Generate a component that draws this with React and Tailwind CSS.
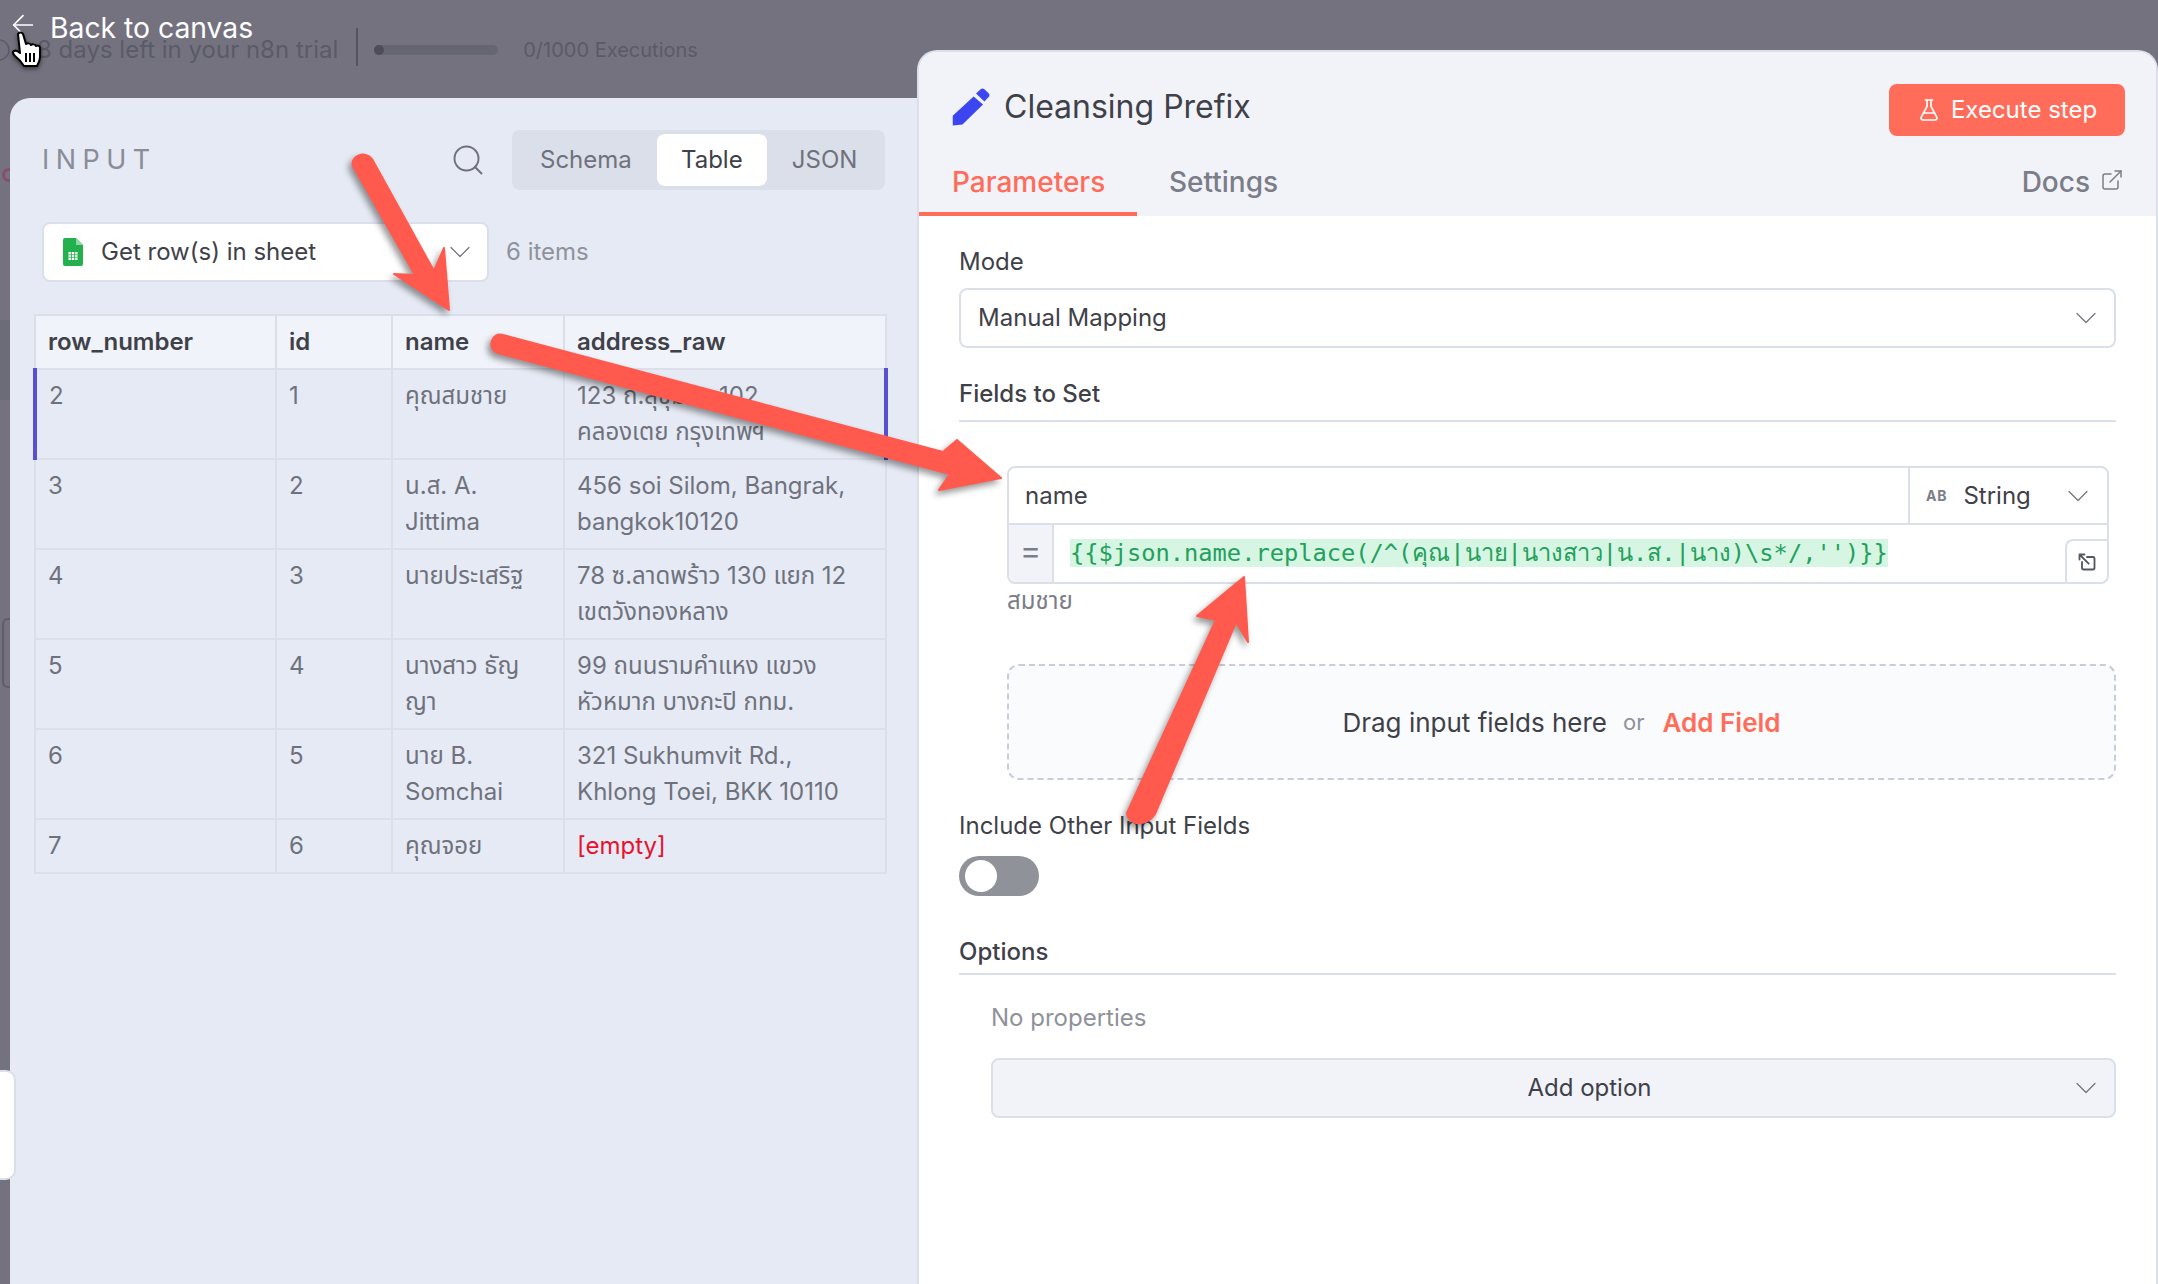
import React from 'react';
import { ChevronDown, Search, FlaskConical, ExternalLink, ArrowLeft, Info } from 'lucide-react';

const rows = [
  { num: '2', id: '1', name: ['คุณสมชาย'], address: ['123 ถ.สุขุมวิท 102', 'คลองเตย กรุงเทพฯ'], active: true },
  { num: '3', id: '2', name: ['น.ส. A.', 'Jittima'], address: ['456 soi Silom, Bangrak,', 'bangkok10120'] },
  { num: '4', id: '3', name: ['นายประเสริฐ'], address: ['78 ซ.ลาดพร้าว 130 แยก 12', 'เขตวังทองหลาง'] },
  { num: '5', id: '4', name: ['นางสาว ธัญ', 'ญา'], address: ['99 ถนนรามคำแหง แขวง', 'หัวหมาก บางกะปิ กทม.'] },
  { num: '6', id: '5', name: ['นาย B.', 'Somchai'], address: ['321 Sukhumvit Rd.,', 'Khlong Toei, BKK 10110'] },
  { num: '7', id: '6', name: ['คุณจอย'], empty: true },
];

const SheetIcon = () => (
  <svg width="20" height="28" viewBox="0 0 20 28" className="shrink-0">
    <path d="M2 0h11l7 7v19a2 2 0 0 1-2 2H2a2 2 0 0 1-2-2V2a2 2 0 0 1 2-2z" fill="#23b14d" />
    <path d="M13 0l7 7h-7z" fill="#8ed8a6" />
    <path d="M5.500 14h9v8h-9z" fill="#fff" />
    <path d="M5.500 16.700h9M5.500 19.300h9M8.500 14v8M11.500 14v8" stroke="#23b14d" strokeWidth="0.8" />
  </svg>
);

const PenIcon = () => (
  <svg width="40" height="40" viewBox="30 35 115 115" className="shrink-0">
    <path d="M95 62l27 23-59 58-28 3v-28z" fill="#3b46f0" />
    <path d="M102 54l14-13c3-2 6-2 9 0l13 12c3 3 3 7 1 10l-13 14z" fill="#3b46f0" />
  </svg>
);

const ExpandIcon = () => (
  <svg width="20" height="20" viewBox="0 0 24 24" fill="none" stroke="#555761" strokeWidth="2.200" strokeLinecap="round" strokeLinejoin="round">
    <path d="M12 6h7a2 2 0 0 1 2 2v11a2 2 0 0 1-2 2H8a2 2 0 0 1-2-2v-7" />
    <path d="M14 14L3 3M3 9V3h6" />
  </svg>
);

const HandCursor = () => (
  <svg width="34" height="40" viewBox="0 0 34 40" className="absolute left-[9px] top-[29px] drop-shadow-[0_2px_2px_rgba(0,0,0,0.5)]">
    <path
      d="M9 5c1-2 4-2 5 0l3 10c1-1 4-1 5 1 1-1 4-1 5 1 2-1 4 0 4 2l0 9c0 4-2 7-3 9H15c-2-3-5-7-9-10-2-2-3-4-1-5 2-1 4 0 6 2z"
      fill="#fff"
      stroke="#000"
      strokeWidth="2"
      strokeLinejoin="round"
    />
    <path d="M17 24v9M21 24v9M25 24v9" stroke="#000" strokeWidth="2" />
  </svg>
);

// the red annotation arrows drawn on top of the screenshot
const Arrows = () => (
  <svg width="2158" height="1284" viewBox="0 0 2158 1284" className="pointer-events-none absolute inset-0 drop-shadow-[-3px_4px_3px_rgba(0,0,0,0.4)]">
    <g fill="#ff5a4d" stroke="#ff5a4d" strokeWidth="2" strokeLinejoin="round">
      <path d="M353 166c-3-10 12-16 19-7l62 112 10-23 5 62-55-36 21 1z" />
      <path d="M503 335l440 117 14-12 44 38-62 12 11-16-452-121c-12-4-6-22 5-18z" />
      <path d="M1236 622l-79 187c-4 16-28 20-30 4l89-193-19-4 47-39 4 65z" />
    </g>
  </svg>
);

const Chevron = ({ className = '' }) => <ChevronDown size={36} strokeWidth={0.8} className={`text-[#6f727d] ${className}`} />;

const TableCell = ({ lines, className = '' }) => (
  <td className={`border-2 border-[#dadfe9] px-[12px] pt-[8px] align-top leading-[36px] whitespace-nowrap ${className}`}>
    {lines.map((line) => (
      <div key={line}>{line}</div>
    ))}
  </td>
);

const InputPanel = () => (
  <div className="h-[1186px] w-[907px] rounded-tl-[20px] bg-[#e6eaf4] px-[24px] pt-[32px]">
    <div className="flex h-[60px] items-center pl-[8px] pr-[8px]">
      <span className="text-[27px] tracking-[0.24em] text-[#8a8d97]">INPUT</span>
      <Search size={36} strokeWidth={1.300} className="ml-auto mr-[26px] text-[#6f727d]" />
      <div className="flex h-[60px] w-[373px] items-center rounded-[8px] bg-[#dadfe9] pl-[28px] text-[24px] text-[#6f727d]">
        <span>Schema</span>
        <span className="ml-[25px] flex h-[52px] w-[110px] items-center justify-center rounded-[8px] bg-white text-[#3f4149]">Table</span>
        <span className="ml-[25px]">JSON</span>
      </div>
    </div>
    <div className="mt-[32px] flex items-center pl-[8px]">
      <div className="flex h-[60px] w-[447px] items-center rounded-[8px] border-2 border-[#dadfe9] bg-white pl-[19px] pr-[9px] text-[24px] text-[#3f4149]">
        <SheetIcon />
        <span className="ml-[18px]">Get row(s) in sheet</span>
        <Chevron className="ml-auto" />
      </div>
      <span className="ml-[17px] text-[24px] text-[#8f929b]">6 items</span>
    </div>
    <table className="-ml-[1px] mt-[32px] w-[851px] table-fixed border-collapse text-[24px] text-[#6f727d]">
      <colgroup>
        <col className="w-[241px]" />
        <col className="w-[116px]" />
        <col className="w-[172px]" />
        <col className="w-[322px]" />
      </colgroup>
      <thead>
        <tr className="h-[54px] bg-[#f1f3fa] text-left font-semibold text-[#3f4149]">
          {['row_number', 'id', 'name', 'address_raw'].map((h) => (
            <th key={h} className="border-2 border-[#dadfe9] px-[12px] font-semibold">{h}</th>
          ))}
        </tr>
      </thead>
      <tbody>
        {rows.map((row) => (
          <tr key={row.num} className={row.empty ? 'h-[54px]' : 'h-[90px]'}>
            <TableCell lines={[row.num]} className={row.active ? 'border-l-4 border-l-[#5a4fcf]' : ''} />
            <TableCell lines={[row.id]} />
            <TableCell lines={row.name} />
            {row.empty ? (
              <TableCell lines={['[empty]']} className="text-[#e8112d]" />
            ) : (
              <TableCell lines={row.address} className={row.active ? 'border-r-4 border-r-[#5a4fcf]' : ''} />
            )}
          </tr>
        ))}
      </tbody>
    </table>
  </div>
);

const SettingsPanel = () => (
  <div className="h-[1234px] overflow-hidden rounded-t-[20px] border-2 border-b-0 border-[#dadfe9] bg-white">
    <div className="h-[164px] bg-[#f1f3f9]">
      <div className="flex h-[96px] items-start pl-[32px] pr-[31px]">
        <div className="mt-[35px] flex items-center gap-[13px]">
          <PenIcon />
          <span className="text-[32px] leading-[38px] text-[#3f4149]">Cleansing Prefix</span>
        </div>
        <button className="mt-[32px] ml-auto flex h-[52px] w-[236px] items-center justify-center gap-[10px] rounded-[8px] bg-[#ff6d5a] text-[24px] text-white">
          <FlaskConical size={24} strokeWidth={1.700} />
          Execute step
        </button>
      </div>
      <div className="flex h-[68px] items-stretch pr-[32px] text-[28px]">
        <div className="flex w-[218px] items-center border-b-4 border-[#ff6d5a] pl-[33px] pt-[4px] font-medium text-[#ff6d5a]">Parameters</div>
        <div className="ml-[32px] flex items-center font-medium text-[#7b7d87]">Settings</div>
        <div className="ml-auto flex items-center gap-[10px] font-medium text-[#7b7d87]">
          Docs
          <ExternalLink size={24} strokeWidth={1.500} className="mb-[4px]" />
        </div>
      </div>
    </div>

    <div className="pl-[40px] pr-[40px] pt-[31px]">
      <div className="text-[24px] leading-[30px] text-[#3f4149]">Mode</div>
      <div className="mt-[11px] flex h-[60px] items-center rounded-[8px] border-2 border-[#dadfe9] pl-[17px] pr-[10px] text-[24px] text-[#3f4149]">
        Manual Mapping
        <Chevron className="ml-auto" />
      </div>

      <div className="mt-[31px] border-b-2 border-[#dadfe9] pb-[11px] text-[24px] font-medium leading-[30px] text-[#3f4149]">Fields to Set</div>

      <div className="ml-[48px] mt-[44px]">
        <div className="mr-[7px] overflow-hidden rounded-[8px] border-2 border-[#dadfe9]">
          <div className="flex h-[57px] items-center border-b-2 border-[#dadfe9] text-[24px] text-[#3f4149]">
            <span className="flex-1 pl-[16px]">name</span>
            <div className="flex h-full w-[199px] items-center border-l-2 border-[#dadfe9] pl-[16px] pr-[11px]">
              <span className="text-[14px] font-bold tracking-[0.06em] text-[#7b7d87]">AB</span>
              <span className="ml-[16px]">String</span>
              <Chevron className="ml-auto" />
            </div>
          </div>
          <div className="flex h-[57px]">
            <div className="flex w-[45px] items-center justify-center border-r-2 border-[#dadfe9] bg-[#f1f3f9] pb-[6px] text-[32px] text-[#7b7d87]">=</div>
            <div className="flex-1 pl-[16px] pt-[15px]">
              <span className="bg-[#d6f5e3] font-['DejaVu_Sans_Mono',monospace] text-[23.7px] leading-[27px] text-[#22a05c]">{"{{$json.name.replace(/^(คุณ|นาย|นางสาว|น.ส.|นาง)\\s*/,'')}}"}</span>
            </div>
            <div className="mt-[14px] flex w-[42px] items-center justify-center rounded-tl-[8px] border-l-2 border-t-2 border-[#dadfe9]">
              <ExpandIcon />
            </div>
          </div>
        </div>
        <div className="mt-[3px] text-[24px] leading-[28px] text-[#7b7d87]">สมชาย</div>
      </div>

      <div className="ml-[48px] mt-[49px] flex h-[116px] items-center justify-center rounded-[12px] border-2 border-dashed border-[#c9cdd9] bg-[#fafbfd] text-[26px]">
        <span className="text-[#3f4149]">Drag input fields here</span>
        <span className="ml-[16px] text-[22px] text-[#8f929b]">or</span>
        <span className="ml-[18px] font-semibold text-[#ff6d5a]">Add Field</span>
      </div>

      <div className="mt-[31px] text-[24px] leading-[30px] text-[#3f4149]">Include Other Input Fields</div>
      <div className="mt-[15px] flex h-[40px] w-[80px] items-center rounded-full bg-[#909299] pl-[6px]">
        <span className="h-[32px] w-[32px] rounded-full bg-white" />
      </div>

      <div className="mt-[41px] border-b-2 border-[#dadfe9] pb-[6px] text-[24px] font-medium leading-[30px] text-[#3f4149]">Options</div>
      <div className="ml-[32px]">
        <div className="mt-[28px] text-[24px] leading-[30px] text-[#8f929b]">No properties</div>
        <div className="relative mt-[25px] flex h-[60px] items-center justify-center rounded-[8px] border-2 border-[#dadfe9] bg-[#f1f3f9] pl-[72px] text-[24px] text-[#3f4149]">
          Add option
          <Chevron className="absolute right-[10px] top-[10px]" />
        </div>
      </div>
    </div>
  </div>
);

const TopBar = () => (
  <div className="relative h-[98px]">
    <div className="flex h-[100px] items-start pt-[28px] text-[24px] text-[#5b5a67]">
      <Info size={24} strokeWidth={1.500} className="ml-[-13px] mt-[10px]" />
      <span className="ml-[26px] mt-[5px] leading-[34px]">8 days left in your n8n trial</span>
      <span className="ml-[18px] h-[38px] w-[2px] bg-[#55545f]" />
      <span className="relative ml-[16px] mt-[17px] h-[10px] w-[124px] rounded-full bg-[#666572]">
        <span className="absolute left-0 top-0 h-[10px] w-[10px] rounded-full bg-[#4d4c58]" />
      </span>
      <span className="ml-[25px] mt-[6px] text-[20px] leading-[32px]">0/1000 Executions</span>
    </div>
    {/* back link sits over the trial banner */}
    <div className="absolute left-[7px] top-[10px] flex items-center gap-[11px] text-[28.3px] leading-[36px] text-white">
      <ArrowLeft size={32} strokeWidth={1.300} className="-mt-[6px]" />
      Back to canvas
    </div>
    <HandCursor />
  </div>
);

// what shows of the dimmed canvas in the thin strip left of the input panel
const CanvasStrip = () => (
  <div className="relative w-[10px] shrink-0 overflow-hidden">
    <div className="absolute left-[2px] top-[70px] h-[14px] w-[14px] rounded-full border-[3px] border-[#84506e]" />
    <div className="absolute left-0 top-[222px] h-[80px] w-full bg-[#6c6b78]" />
    <div className="absolute left-[2px] top-[520px] h-[70px] w-[14px] rounded-[6px] border-2 border-[#5e5d69]" />
  </div>
);

export default function App() {
  return (
    <div className="relative flex h-[1284px] w-[2158px] overflow-hidden bg-[#74727f] font-['Inter','Noto_Sans_Thai','Noto_Sans','DejaVu_Sans',sans-serif]">
      <div className="w-[917px] shrink-0">
        <TopBar />
        <div className="flex">
          <CanvasStrip />
          <InputPanel />
        </div>
      </div>
      <div className="flex-1 pt-[50px]">
        <SettingsPanel />
      </div>
      <div className="absolute bottom-[104px] left-0 h-[110px] w-[16px] rounded-r-[10px] border-2 border-l-0 border-[#dadfe9] bg-white" />
      <Arrows />
    </div>
  );
}
